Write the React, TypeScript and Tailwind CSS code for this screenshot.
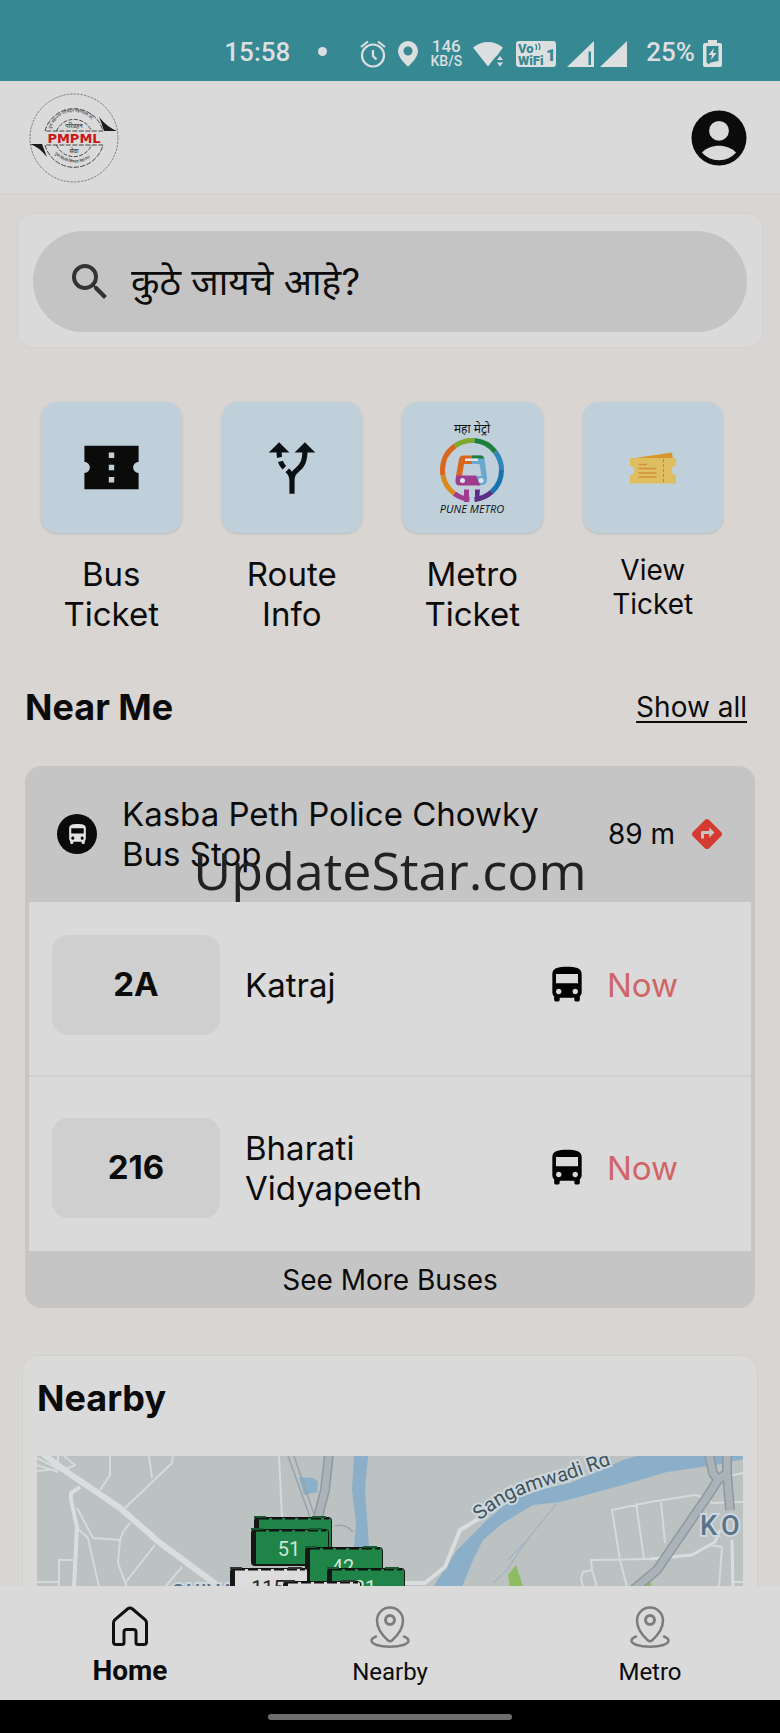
import { useState } from "react"
import type { ReactNode } from "react"
import { MdAltRoute, MdDirections, MdDirectionsBus, MdSearch } from "react-icons/md"

interface Departure {
  route: string
  destination: string
  eta: string
}

const DEPARTURES: Departure[] = [
  { route: "2A", destination: "Katraj", eta: "Now" },
  { route: "216", destination: "Bharati Vidyapeeth", eta: "Now" },
]

const TABS = ["Home", "Nearby", "Metro"]

/* ---------- Status bar ---------- */

function StatusBar() {
  return (
    <div className="flex h-[81px] shrink-0 items-end justify-end bg-[#368892] pr-[58px] pb-[13px] font-[Roboto] text-[26px] leading-8 font-medium text-[#dcdfe0]">
      <span>15:58</span>
      <span className="mx-7 mb-3 size-[9px] rounded-full bg-[#dcdfe0]" />
      {/* Alarm */}
      <svg className="ml-1 size-7" viewBox="0 0 28 28" fill="none" stroke="currentColor" strokeWidth="2.2">
        <circle cx="14" cy="15.500" r="11" />
        <path d="M14 10v6l3.500 3.500M2 7l7-5.500M26 7l-7-5.500" />
      </svg>
      {/* Location */}
      <svg className="ml-[10px] h-7 w-[22px]" viewBox="0 0 22 28" fill="currentColor" fillRule="evenodd">
        <path d="M11 1a10 10 0 0 0-10 10c0 7.500 10 15.500 10 15.500S21 18.500 21 11A10 10 0 0 0 11 1zm0 14.500a4.500 4.500 0 1 1 0-9 4.500 4.500 0 0 1 0 9z" />
      </svg>
      <span className="ml-3 flex w-[30px] flex-col items-center">
        <span className="text-[17px] leading-[15px]">146</span>
        <span className="text-sm leading-[14px]">KB/S</span>
      </span>
      {/* Wifi */}
      <svg className="ml-3 h-7 w-[31px]" viewBox="0 0 31 28" fill="currentColor">
        <path d="M0 7.500a23 23 0 0 1 30 0L24.500 15 20 20l-5 6.500z" />
        <path d="M22 20l5-6 5 6v9h-10z" className="text-[#368892]" />
        <path d="M24 20l3-4 3 4zM24 22.500l3 4 3-4z" />
      </svg>
      <svg className="ml-3 h-7 w-10" viewBox="0 0 40 28">
        <rect y="1" width="40" height="26" rx="3" fill="#dcdfe0" />
        <g fill="#368892" className="font-[Roboto] font-black">
          <text x="2" y="13" fontSize="13">Vo</text>
          <text x="2" y="25" fontSize="13">WiFi</text>
          <text x="30" y="21" fontSize="17">1</text>
        </g>
        <path d="M19.500 4q2 3 .5 6M22.500 3q2.500 4 .5 7" stroke="#368892" strokeWidth="1.300" fill="none" />
      </svg>
      <svg className="ml-[11px] size-7" viewBox="0 0 28 28" fill="currentColor">
        <path d="M0 27L27 1v26z" />
        <path d="M21.500 11.500h2.500V25h-2.500z" className="text-[#368892]" />
      </svg>
      <svg className="ml-[5px] size-7" viewBox="0 0 28 28" fill="currentColor">
        <path d="M0 27L27 1v26z" />
      </svg>
      <span className="ml-[18px]">25%</span>
      <svg className="ml-2 h-7 w-[19px]" viewBox="0 0 19 28" fill="currentColor">
        <path d="M5 0h9v3h3q2 0 2 2v20q0 2-2 2H2q-2 0-2-2V5q0-2 2-2h3z" />
        <path d="M3.500 6h12v15l-8 1.500-2 2-2-2.500z" className="text-[#368892]" />
        <path d="M11 8l-5.500 7h3.500l-1 5 5.500-7h-3.500z" />
      </svg>
    </div>
  )
}

/* ---------- Header ---------- */

function PmpmlLogo() {
  return (
    <svg className="size-[90px]" viewBox="0 0 90 90" role="img" aria-label="PMPML">
      <g fill="none" stroke="#444" strokeWidth="1">
        <circle cx="45" cy="45" r="44" strokeDasharray="2.500 1" strokeWidth=".6" />
        <path d="M16 38a30 30 0 0 1 58 0zM16 52a30 30 0 0 0 58 0z" strokeDasharray="5 1.500" />
        <path d="M27.500 38a19 19 0 0 1 35 0M27.500 52a19 19 0 0 0 35 0" strokeDasharray="4 1.500" />
      </g>
      <path d="M70 24q3 7 5 14h13q-10-4-18-14zM1 51h12l5 13Q10 54 1 51z" fill="#1b1b1b" />
      <path id="logo-top" d="M22 36a24 24 0 0 1 46 0" fill="none" />
      <path id="logo-bottom" d="M22 56a27 27 0 0 0 47 0" fill="none" />
      <g fill="#222" className="font-['Noto_Sans',sans-serif]" fontSize="4">
        <text>
          <textPath href="#logo-top">पुणे महानगर परिवहन महामंडळ लि.</textPath>
        </text>
        <text>
          <textPath href="#logo-bottom" startOffset="6">पुणे-पिंपरी-चिंचवड महानगर</textPath>
        </text>
        <text x="45" y="34.500" fontSize="6" textAnchor="middle">परिवहन</text>
        <text x="45" y="60" fontSize="6" textAnchor="middle">सेवा</text>
      </g>
      <text x="45" y="50" textAnchor="middle" fontSize="13" fill="#cc1517" className="font-['DejaVu_Sans'] font-bold">
        PMPML
      </text>
    </svg>
  )
}

function Header() {
  return (
    <header className="flex h-[114px] shrink-0 items-center justify-between border-b-2 border-[#d4d1d1] bg-[#dadada] pt-[2px] pr-7 pl-[29px]">
      <PmpmlLogo />
      <button type="button" aria-label="Account">
        <svg className="size-[66px]" viewBox="0 0 24 24">
          <circle cx="12" cy="12" r="10" fill="#0b0b0b" />
          <circle cx="12" cy="9.400" r="3.600" fill="#dadada" />
          <path d="M5.800 17.300C7.300 15.600 9.600 14.800 12 14.800s4.700.8 6.200 2.500C16.600 19.100 14.600 20.100 12 20.100S7.400 19.100 5.800 17.300z" fill="#dadada" />
        </svg>
      </button>
    </header>
  )
}

/* ---------- Shortcuts ---------- */

function TicketIcon() {
  return (
    <svg className="size-[65px]" viewBox="0 0 24 24" fill="#0b0b0b">
      <path d="M22 10V4H2v6c1.100 0 2 .9 2 2s-.9 2-2 2v6h20v-6c-1.100 0-2-.9-2-2s.9-2 2-2zm-9 7.500h-2v-2h2v2zm0-4.500h-2v-2h2v2zm0-4.500h-2v-2h2v2z" />
    </svg>
  )
}

// start and length of each arc, in degrees clockwise from three o'clock
const METRO_ARCS = [
  { color: "#1874ad", start: 0, length: 48 },
  { color: "#5b2f86", start: 48, length: 37 },
  { color: "#a03c8e", start: 95, length: 32 },
  { color: "#d98a1c", start: 127, length: 43 },
  { color: "#d9661f", start: 170, length: 65 },
  { color: "#7fa82f", start: 235, length: 40 },
  { color: "#1c7f3c", start: 275, length: 47 },
  { color: "#2f86b8", start: 322, length: 38 },
]

function MetroIcon() {
  return (
    <svg className="h-24 w-20" viewBox="0 0 80 96">
      <text x="40" y="13" textAnchor="middle" fontSize="12" fill="#111" className="font-['Noto_Sans',sans-serif] italic">
        महा मेट्रो
      </text>
      <g fill="none" strokeWidth="5">
        {METRO_ARCS.map((arc) => (
          <circle
            key={arc.start}
            cx="40"
            cy="50"
            r="29.500"
            stroke={arc.color}
            pathLength="360"
            strokeDasharray={`${arc.length} ${360 - arc.length}`}
            strokeDashoffset={-arc.start}
          />
        ))}
      </g>
      <path d="M32 69.500h5V82h-5z" fill="#a03c8e" />
      <path d="M43 69.500h5l-1 11-4 1.500z" fill="#5b2f86" />
      <path d="M31 35.500h9V44h-8l-2 12h-6l3-17q.8-3.500 4-3.500z" fill="#d9661f" />
      <path d="M40 35.500h9q3 0 3.500 3L55 58q.5 7-5 7h-6v-9h5.500L47.500 44H40z" fill="#6aa9cf" />
      <path d="M40 35.500h9q2.500 0 3 3h-12z" fill="#1c7f3c" />
      <path d="M24 55.500h20l4.500 10H28q-5 0-4.500-5z" fill="#a03c8e" />
      <path d="M33 38.500h13v2.500H33z" fill="#dbe6ec" />
      <circle cx="30.500" cy="60.500" r="2.500" fill="#dbe6ec" />
      <circle cx="49" cy="60.500" r="2.500" fill="#dbe6ec" />
      <text x="40" y="93" textAnchor="middle" fontSize="11" fill="#111" className="font-['Open_Sans'] font-medium italic">
        PUNE METRO
      </text>
    </svg>
  )
}

function YellowTicketsIcon() {
  return (
    <svg className="h-8 w-[46px]" viewBox="0 0 46 32">
      <path d="M5 6L42 .5 43 8H5z" fill="#d9952b" />
      <path d="M0 6h46v8a4.500 4.500 0 0 0 0 9v8.500H0V23a4.500 4.500 0 0 0 0-9z" fill="#dfbd61" />
      <path d="M33.500 7v24" stroke="#b98a35" strokeDasharray="3 2" />
      <path d="M8.500 12.500H17M8.500 16.500h18M8.500 21h18M8.500 25h18" stroke="#cf9336" strokeWidth="1.300" />
    </svg>
  )
}

interface ShortcutProps {
  label: string
  icon: ReactNode
  compact?: boolean
}

function Shortcut({ label, icon, compact }: ShortcutProps) {
  return (
    <a href="#" className="flex flex-col items-center text-center">
      <span className="flex h-[131px] w-full items-center justify-center rounded-2xl bg-[#c0d0da] text-[#0b1014] shadow-sm">
        {icon}
      </span>
      <span className={compact ? "mt-5 w-24 text-[28px] leading-[34px]" : "mt-[21px] w-24 text-[33px] leading-10"}>
        {label}
      </span>
    </a>
  )
}

/* ---------- Near me ---------- */

function DepartureRow({ departure }: { departure: Departure }) {
  return (
    <li className="flex items-center border-[#cfcfcf] pl-[23px] first:border-b-2 first:pb-10 last:pt-[41px]">
      <span className="flex h-[100px] w-[168px] items-center justify-center rounded-2xl bg-[#cfcfcf] text-[33px] font-bold">
        {departure.route}
      </span>
      <span className="ml-[25px] flex-1 pr-14 text-[33px] leading-10">{departure.destination}</span>
      <MdDirectionsBus className="size-11 text-black" />
      <span className="ml-[18px] w-36 text-[33px] leading-10 text-[#d06568]">{departure.eta}</span>
    </li>
  )
}

function StopCard() {
  return (
    <section className="relative mx-[25px] mt-[37px] overflow-hidden rounded-2xl bg-[#c5c5c5]">
      <div className="flex h-[136px] items-center pr-[30px] pl-8">
        <span className="flex size-10 shrink-0 items-center justify-center rounded-full bg-[#0b0b0b]">
          <MdDirectionsBus className="size-[25px] text-[#e4e4e4]" />
        </span>
        <h3 className="ml-[25px] flex-1 text-[33px] leading-10">Kasba Peth Police Chowky Bus Stop</h3>
        <span className="ml-7 text-[28px]">89 m</span>
        <MdDirections className="ml-[14px] size-9 text-[#d43a30]" />
      </div>
      <ul className="mx-1 bg-[#dadada] py-[33px]">
        {DEPARTURES.map((departure) => (
          <DepartureRow key={departure.route} departure={departure} />
        ))}
      </ul>
      <button type="button" className="h-[57px] w-full text-[28px]">
        See More Buses
      </button>
      <span className="pointer-events-none absolute inset-x-0 top-[67px] text-center font-['Open_Sans'] text-[52px] leading-[74px] text-[#222]">
        UpdateStar.com
      </span>
    </section>
  )
}

/* ---------- Map ---------- */

interface BusMarkerProps {
  x: number
  y: number
  width?: number
  label?: string
  light?: boolean
}

function BusMarker({ x, y, width = 78, label, light }: BusMarkerProps) {
  return (
    <g transform={`translate(${x} ${y})`}>
      <rect width={width} height="37" rx="4" fill="#161616" />
      <path d={`M5 1h${width - 8}q2 0 2 2v32H5z`} fill={light ? "#dcdcdc" : "#1e8447"} />
      <path d={`M5 1.500h${width - 8}`} stroke="#111" strokeWidth="2" strokeDasharray="10 3" />
      <path d={`M0 0h12M${width - 20} 0h14`} stroke={light ? "#333" : "#14592f"} strokeWidth="2" />
      <text x="38" y="27" textAnchor="middle" fontSize="20" fill={light ? "#222" : "#cfe6d6"}>
        {label}
      </text>
    </g>
  )
}

function NearbyMap() {
  return (
    <svg
      className="min-h-0 w-full flex-1 bg-[#bcc1c1] font-[Roboto]"
      viewBox="0 0 706 130"
      preserveAspectRatio="xMidYMin slice"
      role="img"
      aria-label="Map of buses nearby"
    >
      <rect width="706" height="130" fill="#bcc1c1" />

      {/* Water */}
      <g fill="#8bafc8">
        <path d="M262 21l13 1q6 2 6 5l-1 9-13 3z" />
        <path d="M317 0h14l-3 34 4 57h-15l2-24-4-33z" />
        <path d="M396 131l24-37 30-30 26-22 27-8 33-8 50-22 14-4h106v3l-27 6-49 7-44 13-63 17-27 3-30 18-20 17-10 20-11 27z" />
      </g>
      <path d="M520 47l-30 37-20 30-14 13M493 81l-22 23" fill="none" stroke="#93aec2" />

      {/* Parks */}
      <path d="M479 109l4 12 3 10h-13l-2-12zM606 131l7-6 2 6z" fill="#8cbd62" />

      {/* Local streets */}
      <g fill="none" stroke="#d6dadb" strokeWidth="2" strokeLinejoin="round">
        <path d="M0 9l21 7M0 15l30-3M0 2l25 13M21 0v8l4 7 13-6L27 0" />
        <path d="M73 0v19L63 34M136 0l-1 7-47 45M112 0l3 22" />
        <path d="M40 52l16 30 27 2 3-8 7-9M40 72l11 10 11 49M83 84l-2 23 7 19 2 5M118 89l-30 38M145 111l-17 20" />
        <path d="M36 104H22v27M0 126h21M242 0l3 61" />
        <path d="M658 39l-45 7-38 8 8 50 7 27M599 47l8 56M624 46l4 41M613 103l-59 1 1 10-9 2-2 6 2 9M555 114l5 17" />
        <path d="M658 39l12 3 5 5 31-1M673 89l12 2-3 40M696 126h10M692 20l14-3" />
      </g>
      <g fill="none" stroke="#d9dddd" strokeWidth="4" strokeLinejoin="round">
        <path d="M43 31l-9 6v7l6 27-3 60" />
        <path d="M367 127h21l20-16 15-37 20-12" />
        <path d="M613 103l42-4 23-13 5-12M695 84l1 47" strokeWidth="3" />
      </g>
      <path d="M6-2l24 18 53 36 40 35 57 42" fill="none" stroke="#d9dddd" strokeWidth="6" />

      {/* Railway and highways */}
      <path d="M251 0l22 61M257 0l21 61M298 70q10-3 18 6" fill="none" stroke="#98a4aa" strokeWidth="1.500" />
      <g fill="none" strokeLinejoin="round">
        <path d="M292-2l-4 36-7 27M672-2l4 19 5 7-11 17-50 73-24 20M690-2v19l-9 7M690 17l3 37" stroke="#8d999f" strokeWidth="10" />
        <path d="M292-2l-4 36-7 27M672-2l4 19 5 7-11 17-50 73-24 20M690-2v19l-9 7M690 17l3 37" stroke="#aab4b8" strokeWidth="7" />
      </g>

      {/* Place names */}
      <path id="sangamwadi" d="M443 65C466 43 496 33 528 25L584 5" fill="none" />
      <g stroke="#ccd8df" strokeWidth="4" style={{ paintOrder: "stroke" }}>
        <text fontSize="20" fill="#425158">
          <textPath href="#sangamwadi">Sangamwadi Rd</textPath>
        </text>
        <text x="663 684" y="79" fontSize="27" fill="#5c7287" className="font-medium">
          KO
        </text>
        <text x="135 149 164 170 184" y="143" fontSize="20" fill="#5c7287" className="font-medium">
          SHIVA
        </text>
      </g>

      {/* Buses, back to front */}
      <BusMarker x={217} y={61} />
      <BusMarker x={214} y={73} label="51" />
      <BusMarker x={268} y={91} label="42" />
      <BusMarker x={193} y={112} label="115" light />
      <BusMarker x={290} y={112} label="21" />
      <BusMarker x={246} y={125} light />
    </svg>
  )
}

/* ---------- Bottom navigation ---------- */

function HomeIcon() {
  return (
    <svg className="h-[42px] w-9" viewBox="0 0 36 42" fill="none" stroke="#111" strokeWidth="3" strokeLinejoin="round">
      <path d="M1.500 17q0-2 1.500-3.300L15.500 3q2.500-2 5 0L33 13.700q1.500 1.300 1.500 3.300v19q0 2.500-2.500 2.500H26q-2 0-2-2V26q0-2.500-2.500-2.500h-7Q12 23.500 12 26v10.500q0 2-2 2H4q-2.500 0-2.500-2.500z" />
    </svg>
  )
}

function PinIcon() {
  return (
    <svg className="h-[42px] w-10" viewBox="0 0 40 42" fill="none" stroke="#7c7c7c" strokeWidth="2.500" strokeLinecap="round">
      <path d="M20 1.500A13 13 0 0 0 7 14.500C7 22 13 30 18 34.500q2 1.500 4 0C27 30 33 22 33 14.500A13 13 0 0 0 20 1.500z" />
      <circle cx="20" cy="14" r="4.500" strokeWidth="3" />
      <path d="M6 30.500C3.500 31.500 1.500 33 1.500 34.800 1.500 38 9 40.700 20 40.700S38.500 38 38.500 34.800C38.500 33 36.500 31.500 34 30.500" />
    </svg>
  )
}

interface BottomNavProps {
  active: string
  onChange: (tab: string) => void
}

function BottomNav({ active, onChange }: BottomNavProps) {
  return (
    <nav className="grid h-[114px] shrink-0 grid-cols-3 bg-[#dadada] font-[Roboto]">
      {TABS.map((tab) => (
        <button
          key={tab}
          type="button"
          onClick={() => onChange(tab)}
          className="flex flex-col items-center pt-5"
        >
          {tab === "Home" ? <HomeIcon /> : <PinIcon />}
          <span
            className={
              tab === active
                ? "mt-1 text-[28px] leading-[38px] font-bold"
                : "mt-1 text-2xl leading-10"
            }
          >
            {tab}
          </span>
        </button>
      ))}
    </nav>
  )
}

export default function App() {
  const [tab, setTab] = useState("Home")
  const [query, setQuery] = useState("")

  return (
    <div className="flex h-screen flex-col bg-[#d9d5d3] font-[Inter,'Noto_Sans',sans-serif] text-[#0b0b0b]">
      <StatusBar />
      <Header />

      <main className="flex min-h-0 flex-1 flex-col overflow-hidden">
        <div className="mx-[17px] mt-[18px] rounded-2xl border border-[#d3d2d3] bg-[#dadada] px-[15px] pt-[17px] pb-[15px]">
          <label className="flex h-[101px] items-center rounded-full bg-[#c4c4c4] pr-8 pl-[33px]">
            <MdSearch className="size-12 shrink-0 text-[#333]" />
            <input
              type="text"
              aria-label="कुठे जायचे आहे?"
              placeholder="कुठे जायचे आहे?"
              value={query}
              onChange={(e) => setQuery(e.target.value)}
              className="ml-[17px] h-16 min-w-0 flex-1 bg-transparent text-[37px] outline-none placeholder:text-[#0b0b0b]"
            />
          </label>
        </div>

        <div className="mt-[54px] grid grid-cols-4 gap-10 pr-[57px] pl-[41px]">
          <Shortcut label="Bus Ticket" icon={<TicketIcon />} />
          <Shortcut label="Route Info" icon={<MdAltRoute className="size-[62px]" />} />
          <Shortcut label="Metro Ticket" icon={<MetroIcon />} />
          <Shortcut label="View Ticket" icon={<YellowTicketsIcon />} compact />
        </div>

        <div className="mt-[51px] flex items-center justify-between pr-[33px] pl-[25px]">
          <h2 className="text-[36px] leading-[44px] font-bold">Near Me</h2>
          <a href="#" className="text-[28px] leading-[34px] underline decoration-2 underline-offset-4">
            Show all
          </a>
        </div>
        <StopCard />

        <section className="mx-[22px] mt-[47px] flex min-h-0 flex-1 flex-col rounded-t-2xl border border-b-0 border-[#d0d0cf] bg-[#dadada] px-[14px] pt-5">
          <h2 className="mb-9 text-[36px] leading-[44px] font-bold">Nearby</h2>
          <NearbyMap />
        </section>
      </main>

      <BottomNav active={tab} onChange={setTab} />
      <div className="flex h-[33px] shrink-0 items-center justify-center bg-black">
        <span className="h-[6px] w-[244px] rounded-full bg-[#6e6e6e]" />
      </div>
    </div>
  )
}
